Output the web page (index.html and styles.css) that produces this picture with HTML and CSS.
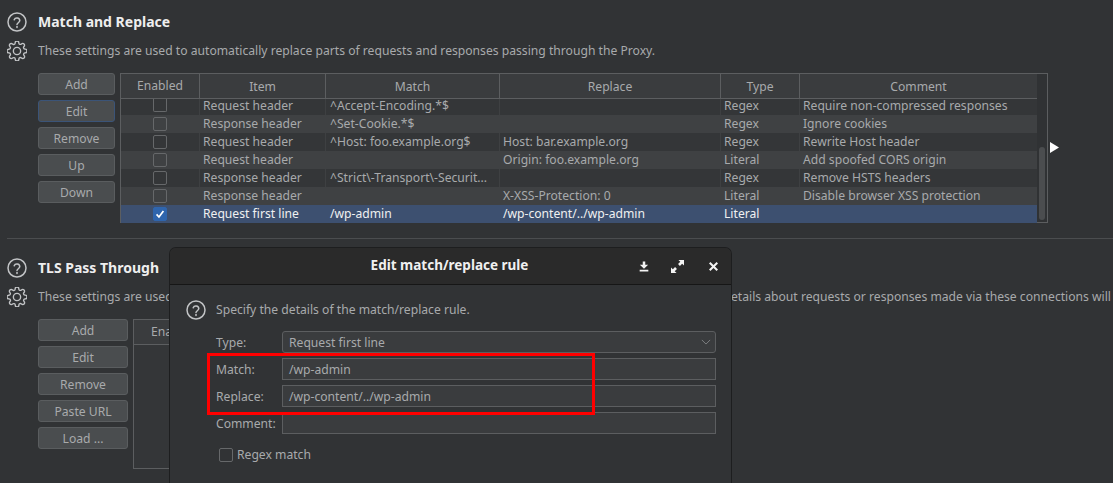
FILE: index.html
```html
<!DOCTYPE html>
<html lang="en">
<head>
    <meta charset="UTF-8">
    <meta name="viewport" content="width=device-width, initial-scale=1.0">
    <title>Match and Replace</title>
    <link rel="stylesheet" href="styles.css">
</head>
<body>
    <svg class="defs" width="0" height="0" aria-hidden="true">
        <symbol id="icon-help" viewBox="0 0 20 20">
            <circle cx="10" cy="10" r="9"/>
            <path d="M7.2 7.8a2.9 2.9 0 0 1 5.6.8c0 1.9-2.8 2.3-2.8 3.9"/>
            <path d="M10 14.6v.9"/>
        </symbol>
        <symbol id="icon-gear" viewBox="1 1 22 22">
            <circle cx="12" cy="12" r="4"/>
            <path d="M19.4 15a1.65 1.65 0 0 0 .33 1.82l.06.06a2 2 0 0 1 0 2.83 2 2 0 0 1-2.83 0l-.06-.06a1.65 1.65 0 0 0-1.82-.33 1.65 1.65 0 0 0-1 1.51V21a2 2 0 0 1-2 2 2 2 0 0 1-2-2v-.09A1.65 1.65 0 0 0 9 19.4a1.65 1.65 0 0 0-1.82.33l-.06.06a2 2 0 0 1-2.83 0 2 2 0 0 1 0-2.83l.06-.06a1.65 1.65 0 0 0 .33-1.82 1.65 1.65 0 0 0-1.51-1H3a2 2 0 0 1-2-2 2 2 0 0 1 2-2h.09A1.65 1.65 0 0 0 4.6 9a1.65 1.65 0 0 0-.33-1.82l-.06-.06a2 2 0 0 1 0-2.83 2 2 0 0 1 2.83 0l.06.06a1.65 1.65 0 0 0 1.82.33H9a1.65 1.65 0 0 0 1-1.51V3a2 2 0 0 1 2-2 2 2 0 0 1 2 2v.09a1.65 1.65 0 0 0 1 1.51 1.65 1.65 0 0 0 1.82-.33l.06-.06a2 2 0 0 1 2.83 0 2 2 0 0 1 0 2.83l-.06.06a1.65 1.65 0 0 0-.33 1.82V9a1.65 1.65 0 0 0 1.51 1H21a2 2 0 0 1 2 2 2 2 0 0 1-2 2h-.09a1.65 1.65 0 0 0-1.51 1z"/>
        </symbol>
    </svg>

    <section class="section section-match">
        <div class="head">
            <svg class="icon"><use href="#icon-help"/></svg>
            <h2>Match and Replace</h2>
            <svg class="icon"><use href="#icon-gear"/></svg>
            <p>These settings are used to automatically replace parts of requests and responses passing through the Proxy.</p>
        </div>
        <div class="content">
            <div class="buttons">
                <button>Add</button>
                <button class="focused">Edit</button>
                <button>Remove</button>
                <button>Up</button>
                <button>Down</button>
            </div>
            <div class="table">
                <div class="table-main">
                    <div class="row header">
                        <span>Enabled</span><span>Item</span><span>Match</span><span>Replace</span><span>Type</span><span>Comment</span>
                    </div>
                    <div class="rows">
                        <div class="row">
                            <span><i class="check"></i></span><span>Request header</span><span>^Accept-Encoding.*$</span><span></span><span>Regex</span><span>Require non-compressed responses</span>
                        </div>
                        <div class="row">
                            <span><i class="check"></i></span><span>Response header</span><span>^Set-Cookie.*$</span><span></span><span>Regex</span><span>Ignore cookies</span>
                        </div>
                        <div class="row">
                            <span><i class="check"></i></span><span>Request header</span><span>^Host: foo.example.org$</span><span>Host: bar.example.org</span><span>Regex</span><span>Rewrite Host header</span>
                        </div>
                        <div class="row">
                            <span><i class="check"></i></span><span>Request header</span><span></span><span>Origin: foo.example.org</span><span>Literal</span><span>Add spoofed CORS origin</span>
                        </div>
                        <div class="row">
                            <span><i class="check"></i></span><span>Response header</span><span>^Strict\-Transport\-Securit...</span><span></span><span>Regex</span><span>Remove HSTS headers</span>
                        </div>
                        <div class="row">
                            <span><i class="check"></i></span><span>Response header</span><span></span><span>X-XSS-Protection: 0</span><span>Literal</span><span>Disable browser XSS protection</span>
                        </div>
                        <div class="row selected">
                            <span><i class="check checked"><svg viewBox="0 0 14 14"><path d="M3 7.5l2.8 3L11 3.5"/></svg></i></span><span>Request first line</span><span>/wp-admin</span><span>/wp-content/../wp-admin</span><span>Literal</span><span></span>
                        </div>
                    </div>
                </div>
                <div class="scrollbar"><div class="thumb"></div></div>
            </div>
            <svg class="pointer" viewBox="0 0 9 11"><path d="M0 0l9 5.5L0 11z"/></svg>
        </div>
    </section>

    <section class="section section-tls">
        <div class="head">
            <svg class="icon"><use href="#icon-help"/></svg>
            <h2>TLS Pass Through</h2>
            <svg class="icon"><use href="#icon-gear"/></svg>
            <p class="split"><span>These settings are used to</span><span>details about requests or responses made via these connections will</span></p>
        </div>
        <div class="content">
            <div class="buttons wide">
                <button>Add</button>
                <button>Edit</button>
                <button>Remove</button>
                <button>Paste URL</button>
                <button>Load ...</button>
            </div>
            <div class="table table-tls">
                <div class="tls-header">Enabled</div>
            </div>
        </div>
    </section>

    <div class="dialog">
        <div class="dialog-title">
            <h3>Edit match/replace rule</h3>
            <div class="dialog-actions">
                <svg viewBox="0 0 12 12"><path d="M4.5 0h3v4H11L6 8.6 1 4h3.5zM.8 9.8h10.4V12H.8z"/></svg>
                <svg viewBox="0 0 14 14"><path d="M8 0h6v6l-2-2-2.4 2.4-2-2L10 2zM0 14V8l2 2 2.4-2.4 2 2L4 12l2 2z"/></svg>
                <svg viewBox="0 0 10 10"><path d="M1.6 0L5 3.4 8.4 0 10 1.6 6.6 5 10 8.4 8.4 10 5 6.6 1.6 10 0 8.4 3.4 5 0 1.6z"/></svg>
            </div>
        </div>
        <div class="dialog-body">
            <div class="dialog-intro">
                <svg class="icon"><use href="#icon-help"/></svg>
                <p>Specify the details of the match/replace rule.</p>
            </div>
            <div class="form">
                <label>Type:</label>
                <div class="field select">Request first line
                    <svg viewBox="0 0 12 7"><path d="M1 1l5 5 5-5"/></svg>
                </div>
                <label>Match:</label>
                <div class="field">/wp-admin</div>
                <label>Replace:</label>
                <div class="field">/wp-content/../wp-admin</div>
                <label>Comment:</label>
                <div class="field"></div>
            </div>
            <div class="regex"><i class="check"></i>Regex match</div>
            <div class="highlight"></div>
        </div>
    </div>
</body>
</html>
```

FILE: styles.css
```css
* {
    box-sizing: border-box;
}
html, body {
    height: 100%;
}
body {
    margin: 0;
    overflow: hidden;
    position: relative;
    background-color: #313335;
    color: #a8aaac;
    font-family: "Noto Sans", sans-serif;
    font-size: 12.15px;
    line-height: 18px;
}
.defs {
    position: absolute;
}
.section {
    margin-left: 7px;
    white-space: nowrap;
}
.section-match {
    height: 239px;
    padding-top: 12px;
    border-bottom: 1px solid #4b4d4f;
}
.section-tls {
    padding-top: 19px;
}
.head {
    display: grid;
    grid-template-columns: 21px 1fr;
    column-gap: 10px;
    row-gap: 9px;
    align-items: center;
}
.head h2 {
    margin: 0;
    color: #eeeeee;
    font-size: 14px;
    font-weight: 700;
    line-height: 20px;
}
.head p {
    margin: 0;
    line-height: 20px;
}
.head .split {
    display: flex;
    justify-content: space-between;
    margin-right: 2px;
}
.icon {
    width: 20px;
    height: 20px;
    fill: none;
    stroke: #c2c4c6;
    stroke-width: 1.5;
    stroke-linecap: round;
    stroke-linejoin: round;
    overflow: visible;
}
.content {
    display: flex;
    align-items: flex-start;
    margin-top: 12px;
    margin-left: 31px;
}
.buttons {
    display: flex;
    flex-direction: column;
    gap: 5px;
    width: 77px;
    margin-right: 5px;
}
.buttons.wide {
    width: 90px;
}
button {
    height: 22px;
    padding: 0;
    background-color: #4a4d4f;
    border: 1px solid #5a5d5f;
    border-radius: 3px;
    color: #a8aaac;
    font-family: inherit;
    font-size: 12.15px;
}
button.focused {
    border-color: #3b5478;
}
.table {
    display: flex;
    width: 928px;
    height: 150px;
    background-color: #343638;
    border: 1px solid #5c5e60;
}
.table-main {
    width: 916px;
}
.row {
    display: grid;
    grid-template-columns: 78px 126px 174px 221px 79px 238px;
    height: 18px;
}
.row span {
    padding-left: 3px;
    overflow: hidden;
    white-space: nowrap;
    border-left: 1px solid #3e4042;
}
.row span:first-child {
    display: flex;
    justify-content: center;
    align-items: center;
    padding-left: 0;
    border-left: none;
}
.rows .row span:nth-child(3) {
    padding-left: 4px;
}
.row.header {
    height: 25px;
    background-color: #3a3c3e;
    border-bottom: 1px solid #5c5e60;
    line-height: 26px;
    text-align: center;
}
.row.header span {
    padding-left: 0;
    border-left-color: #5c5e60;
}
.rows {
    height: 124px;
}
.rows .row:first-child {
    height: 16px;
    line-height: 14px;
}
.rows .row:first-child span {
    overflow: visible;
}
.rows .row:first-child span:first-child {
    align-items: flex-start;
}
.rows .row:first-child .check {
    height: 13px;
    border-top: none;
    border-radius: 0 0 2px 2px;
}
.rows .row:nth-child(even) {
    background-color: #3f4143;
}
.rows .row:nth-child(even) span {
    border-left-color: #3f4143;
}
.row.selected {
    background-color: #3d5070;
    color: #f0f0f0;
}
.row.selected span {
    border-left-color: #3d5070;
}
.check {
    display: block;
    flex: none;
    width: 14px;
    height: 14px;
    border: 1px solid #66686a;
    border-radius: 2px;
}
.check.checked {
    background-color: #2f65ad;
    border-color: #2f65ad;
}
.check svg {
    display: block;
    width: 12px;
    height: 12px;
    fill: none;
    stroke: #ffffff;
    stroke-width: 2;
}
.scrollbar {
    flex: 1;
    background-color: #303234;
    padding: 73px 1px 2px;
}
.thumb {
    width: 6px;
    height: 73px;
    margin-left: 1px;
    background-color: #4b4d4f;
    border-radius: 3px;
}
.pointer {
    flex: none;
    width: 9px;
    height: 11px;
    margin: 69px 0 0 2px;
    fill: #ffffff;
}
.table-tls {
    width: 470px;
    height: 150px;
}
.tls-header {
    width: 100%;
    height: 25px;
    padding-left: 17px;
    background-color: #3a3c3e;
    border-bottom: 1px solid #5c5e60;
    line-height: 24px;
}
.dialog {
    position: absolute;
    left: 169px;
    top: 247px;
    width: 563px;
    height: 236px;
    background-color: #313335;
    border: 1px solid #1d1e1f;
    border-bottom: none;
    border-radius: 7px 7px 0 0;
}
.dialog-title {
    display: flex;
    align-items: center;
    justify-content: center;
    position: relative;
    height: 37px;
    padding-right: 2px;
    padding-bottom: 2px;
    background-color: #2a2a2a;
    border-bottom: 1px solid #161616;
    border-radius: 6px 6px 0 0;
}
.dialog-title h3 {
    margin: 0;
    color: #f0f0f0;
    font-size: 13.5px;
    font-weight: 700;
}
.dialog-actions {
    position: absolute;
    right: 13px;
    top: 12px;
    display: flex;
    align-items: center;
    gap: 22px;
    fill: #f4f4f4;
}
.dialog-actions svg {
    display: block;
    width: 10px;
    height: 11px;
}
.dialog-actions svg:nth-child(2) {
    width: 13px;
    height: 13px;
}
.dialog-actions svg:nth-child(3) {
    width: 9px;
    height: 9px;
    margin-left: 3px;
}
.dialog-body {
    position: relative;
    padding: 15px 15px 0 16px;
}
.dialog-intro {
    display: flex;
    align-items: center;
    gap: 10px;
    height: 20px;
}
.dialog-intro p {
    margin: 0;
}
.form {
    display: grid;
    grid-template-columns: 66px 434px;
    row-gap: 5px;
    align-items: center;
    margin-top: 11px;
    margin-left: 30px;
}
.form label {
    padding-top: 2px;
}
.field {
    position: relative;
    height: 22px;
    padding-left: 6px;
    background-color: #3a3c3e;
    border: 1px solid #5c5e60;
    line-height: 22px;
}
.select {
    border-radius: 3px;
}
.select svg {
    position: absolute;
    right: 4px;
    top: 7px;
    width: 10px;
    height: 6px;
    fill: none;
    stroke: #8a8c8e;
}
.regex {
    display: flex;
    align-items: center;
    gap: 4px;
    margin: 13px 0 0 33px;
    height: 16px;
}
.highlight {
    position: absolute;
    left: 37px;
    top: 68px;
    width: 388px;
    height: 62px;
    border: 3px solid #ff0000;
}
```
